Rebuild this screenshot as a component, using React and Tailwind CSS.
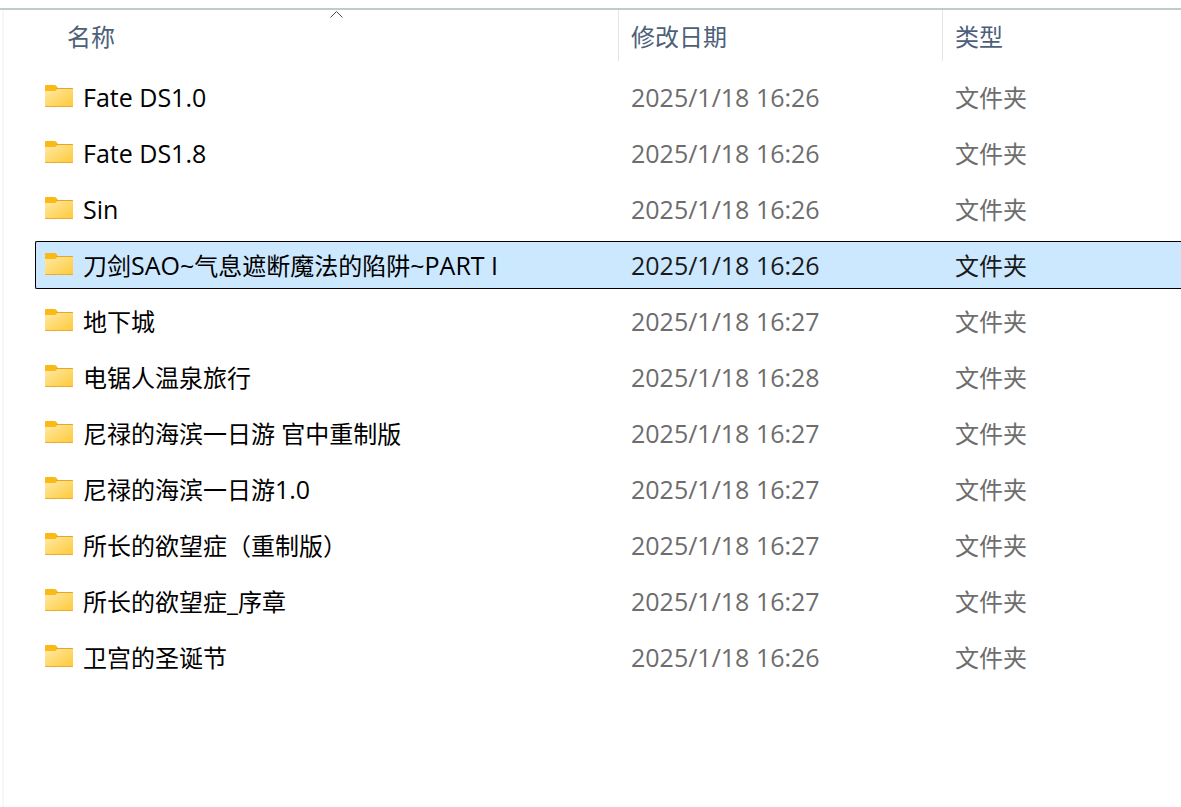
import { useState } from "react";
import clsx from "clsx";

const folders = [
    { name: "Fate DS1.0", date: "2025/1/18 16:26" },
    { name: "Fate DS1.8", date: "2025/1/18 16:26" },
    { name: "Sin", date: "2025/1/18 16:26" },
    { name: "刀剑SAO~气息遮断魔法的陷阱~PART I", date: "2025/1/18 16:26" },
    { name: "地下城", date: "2025/1/18 16:27" },
    { name: "电锯人温泉旅行", date: "2025/1/18 16:28" },
    { name: "尼禄的海滨一日游 官中重制版", date: "2025/1/18 16:27" },
    { name: "尼禄的海滨一日游1.0", date: "2025/1/18 16:27" },
    { name: "所长的欲望症（重制版）", date: "2025/1/18 16:27" },
    { name: "所长的欲望症_序章", date: "2025/1/18 16:27" },
    { name: "卫宫的圣诞节", date: "2025/1/18 16:26" },
];

function FolderIcon() {
    return (
        <svg width="28" height="22" viewBox="0 0 28 22" className="mb-1 shrink-0" aria-hidden="true">
            <defs>
                <linearGradient id="folder" x1="0" y1="0" x2="1" y2="1">
                    <stop offset="0" stopColor="#ffe9a6" />
                    <stop offset="1" stopColor="#ffc937" />
                </linearGradient>
            </defs>
            <path d="M0 1Q0 0 1 0H9.5Q10.5 0 11.2 .8L13 3H27Q28 3 28 4V8H0Z" fill="#fbb917" />
            <path d="M12 3H27.2Q28 3 28 4H11Z" fill="#eaa51c" />
            <path d="M0 6H9.5Q10.5 6 11.2 5.2L12.3 4H28V21Q28 22 27 22H1Q0 22 0 21Z" fill="url(#folder)" />
            <path d="M0 21H28Q28 22 27 22H1Q0 22 0 21Z" fill="#e9ac2c" />
        </svg>
    );
}

function SortArrow() {
    return (
        <svg
            width="15"
            height="8"
            viewBox="0 0 15 8"
            fill="none"
            stroke="#4a4a4a"
            className="absolute top-px left-1/2 -translate-x-1/2"
            aria-hidden="true"
        >
            <path d="M1 6.5L7 .5L13 6.5" />
        </svg>
    );
}

// Latin runs are set a little larger than the Chinese around them
function MixedText({ text }) {
    return (
        <span className="whitespace-pre">
            {text.split(/([\x21-\x7e][\x20-\x7e]*)/).map((part, i) =>
                i % 2 ? (
                    <span key={i} className="text-[25px] leading-none">{part}</span>
                ) : (
                    part
                )
            )}
        </span>
    );
}

export default function App() {
    const [selected, setSelected] = useState(3);

    const cell = (i) =>
        clsx(
            "flex h-12 items-center border-y pt-0.5",
            i === selected ? "border-black bg-[#cce8ff]" : "border-transparent"
        );

    return (
        <div className="flex min-h-screen flex-col bg-white pt-2 font-['Open_Sans','Noto_Sans_CJK_SC',sans-serif] text-2xl [font-kerning:none]">
            <div className="flex grow flex-col border-t-2 border-[#bfcccc]">
                <main className="ml-0.5 grow border-l-2 border-[#f7f7f7] pl-[31px]">
                    <table className="w-full table-fixed border-collapse text-left whitespace-nowrap">
                        <colgroup>
                            <col className="w-[583px]" />
                            <col className="w-[324px]" />
                            <col />
                        </colgroup>
                        <thead className="text-[#4c607a]">
                            <tr>
                                <th className="p-0 pb-2 font-normal">
                                    <button type="button" className="relative ml-5 flex h-[51px] w-[calc(100%-20px)] items-center pt-0.5 pl-3">
                                        <SortArrow />
                                        名称
                                    </button>
                                </th>
                                <th className="p-0 pb-2 font-normal">
                                    <button type="button" className="flex h-[51px] w-full items-center border-l border-[#e5e5e5] pt-0.5 pl-3">
                                        修改日期
                                    </button>
                                </th>
                                <th className="p-0 pb-2 font-normal">
                                    <button type="button" className="flex h-[51px] w-full items-center border-l border-[#e5e5e5] pt-0.5 pl-3">
                                        类型
                                    </button>
                                </th>
                            </tr>
                        </thead>
                        <tbody>
                            {folders.map((f, i) => (
                                <tr key={f.name} onClick={() => setSelected(i)}>
                                    <td className="p-0 py-1 text-black">
                                        <div className={clsx(cell(i), "gap-2.5 rounded-l-xs border-l pl-[9px]")}>
                                            <FolderIcon />
                                            <MixedText text={f.name} />
                                        </div>
                                    </td>
                                    <td className={clsx("p-0 py-1", i === selected ? "text-[#1a1a1a]" : "text-[#6d6d6d]")}>
                                        <div className={clsx(cell(i), "pl-[13px]")}>
                                            <MixedText text={f.date} />
                                        </div>
                                    </td>
                                    <td className={clsx("p-0 py-1", i === selected ? "text-[#1a1a1a]" : "text-[#6d6d6d]")}>
                                        <div className={clsx(cell(i), "pl-[13px]")}>文件夹</div>
                                    </td>
                                </tr>
                            ))}
                        </tbody>
                    </table>
                </main>
            </div>
        </div>
    );
}
